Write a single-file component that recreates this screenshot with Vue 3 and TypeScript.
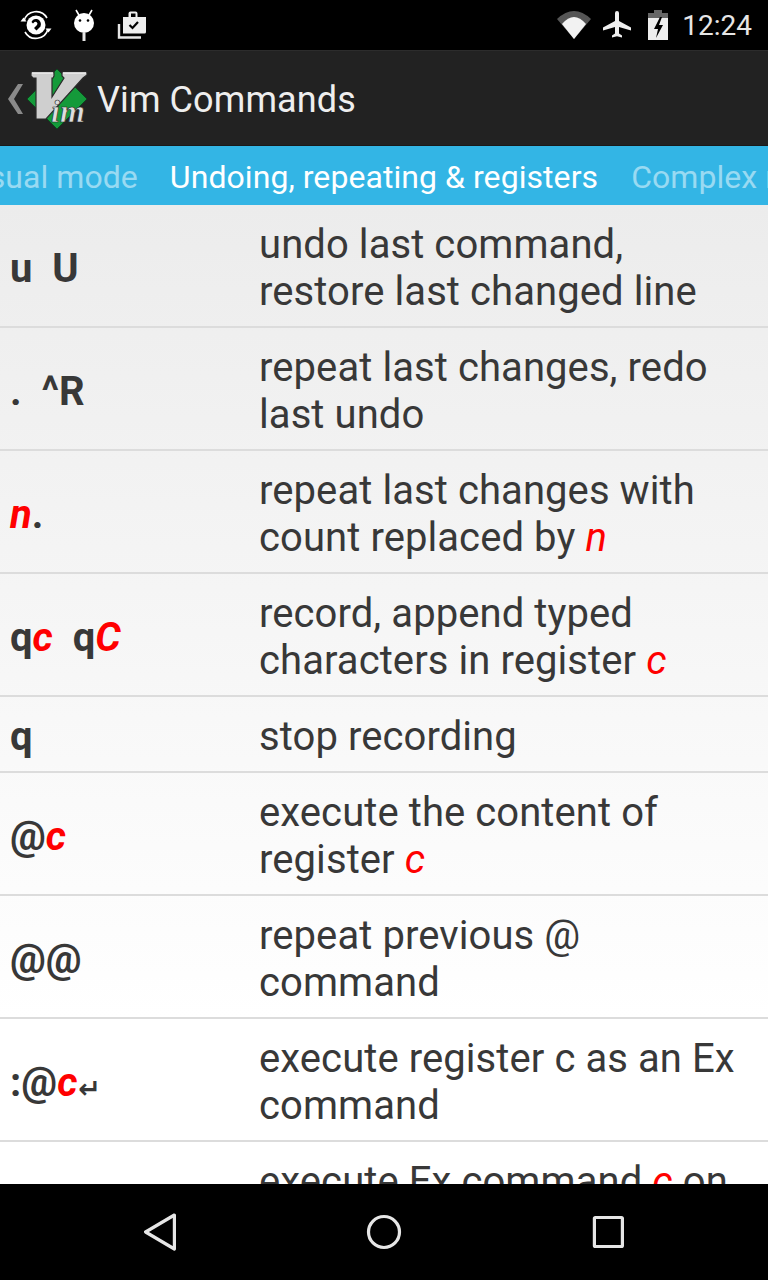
<script setup lang="ts">
interface Part {
  text: string
  arg?: boolean
  enter?: boolean
}

interface Row {
  keys: Part[]
  desc: Part[]
}

const rows: Row[] = [
  { keys: [{ text: 'u\u00a0\u00a0U' }], desc: [{ text: 'undo last command, restore last changed line' }] },
  { keys: [{ text: '.\u00a0\u00a0^R' }], desc: [{ text: 'repeat last changes, redo last undo' }] },
  {
    keys: [{ text: 'n', arg: true }, { text: '.' }],
    desc: [{ text: 'repeat last changes with count replaced by ' }, { text: 'n', arg: true }],
  },
  {
    keys: [{ text: 'q' }, { text: 'c', arg: true }, { text: '\u00a0\u00a0q' }, { text: 'C', arg: true }],
    desc: [{ text: 'record, append typed characters in register ' }, { text: 'c', arg: true }],
  },
  { keys: [{ text: 'q' }], desc: [{ text: 'stop recording' }] },
  {
    keys: [{ text: '@' }, { text: 'c', arg: true }],
    desc: [{ text: 'execute the content of register ' }, { text: 'c', arg: true }],
  },
  { keys: [{ text: '@@' }], desc: [{ text: 'repeat previous @ command' }] },
  {
    keys: [{ text: ':@' }, { text: 'c', arg: true }, { text: '↵', enter: true }],
    desc: [{ text: 'execute register c as an Ex command' }],
  },
  {
    keys: [],
    desc: [{ text: 'execute Ex command ' }, { text: 'c', arg: true }, { text: ' on all lines' }],
  },
]
</script>

<template>
  <div class="screen">
    <div class="status-bar">
      <div class="status-left">
        <svg width="32" height="32" viewBox="0 0 32 32">
          <path d="M4 12a12.500 12.500 0 0 1 23-3M28 20a12.500 12.500 0 0 1-23 3" fill="none" stroke="#fff" stroke-width="1.600" />
          <path d="M0.500 12.500l3-4 3 4zM31.500 19.500l-3 4-3-4z" fill="#fff" />
          <circle cx="16" cy="16" r="9.500" fill="#fff" />
          <path d="M17 10a5.500 5.500 0 0 1 3.500 7.500l-4 4-2.500-2.500 3-3a2 2 0 0 0-2.500-3l-1.500 1.500-1.500-1.500a5 5 0 0 1 5.500-3z" fill="#000" />
        </svg>
        <svg width="24" height="32" viewBox="0 0 24 32">
          <path d="M4 1l3.500 6M20 1l-3.500 6" stroke="#fff" stroke-width="1.600" fill="none" />
          <circle cx="12" cy="14" r="10" fill="#fff" />
          <rect x="10.500" y="24" width="3" height="8" fill="#e6e6e6" />
          <circle cx="8" cy="11.500" r="1.300" fill="#000" />
          <circle cx="16" cy="11.500" r="1.300" fill="#000" />
        </svg>
        <svg width="30" height="30" viewBox="0 0 30 30">
          <path d="M2 14v13.500h22" fill="none" stroke="#e6e6e6" stroke-width="2.400" />
          <path d="M6 7h5.500V3.500a2 2 0 0 1 2-2h5a2 2 0 0 1 2 2V7H29v15a1.500 1.500 0 0 1-1.500 1.500H6z" fill="#eee" />
          <rect x="14" y="3.500" width="4.500" height="3.500" fill="#000" />
          <path d="M12.500 15l3 3 5.500-6" fill="none" stroke="#000" stroke-width="2.200" />
        </svg>
      </div>
      <div class="status-right">
        <svg class="wifi" width="34" height="28" viewBox="0 0 34 28">
          <path d="M0 8Q17-8 34 8L17 28z" fill="#555" />
          <path d="M5 13Q17-1 29 13L17 28z" fill="#f2f2f2" />
        </svg>
        <svg class="plane" width="30" height="30" viewBox="0 0 30 30">
          <path d="M13 3a2 2 0 0 1 4 0v8l12 6.500v3l-12-3.500v6.500l3 2v2l-5-1.200-5 1.200v-2l3-2V17L1 20.500v-3L13 11z" fill="#f0f0f0" />
        </svg>
        <svg width="20" height="30" viewBox="0 0 20 30">
          <path d="M6 0h8v3h6v5H0V3h6z" fill="#666" />
          <path d="M0 8h20v22H0z" fill="#eee" />
          <path d="M12 7l-6 12h4l-2 9 7-13h-4l3-8z" fill="#000" />
        </svg>
        <span class="clock">12:24</span>
      </div>
    </div>

    <div class="app-bar">
      <svg width="15" height="30" viewBox="0 0 15 30">
        <path d="M10 0h5L6 15l9 15h-5L0 15z" fill="#8a8a8a" />
      </svg>
      <svg class="logo" width="62" height="62" viewBox="27 67 62 62">
        <path d="M57 68l30 30-30 30-30-30z" fill="#149a3a" stroke="#0b3d1c" stroke-width="0.800" />
        <path
          d="M31 71h23v4l-1 2h-1v19l12-19-2-2v-4h25v3l-4 3-37 41H36V77h-3l-2-2z"
          fill="#cfcfcf"
          stroke="#2a2a2a"
          stroke-width="1.200"
        />
        <path d="M32 72h21M63 72h23" stroke="#eee" stroke-width="1.500" />
        <text class="logo-text" x="51" y="121">im</text>
      </svg>
      <span class="app-title">Vim Commands</span>
    </div>

    <div class="tabs">
      <span class="tab side left">Visual mode</span>
      <span class="tab active">Undoing, repeating &amp; registers</span>
      <span class="tab side right">Complex repeats</span>
    </div>

    <div class="list">
      <div v-for="(row, i) in rows" :key="i" class="row">
        <div class="keys">
          <span
            v-for="(part, j) in row.keys"
            :key="j"
            :class="{ arg: part.arg, enter: part.enter }"
          >{{ part.text }}</span>
        </div>
        <div class="desc">
          <span v-for="(part, j) in row.desc" :key="j" :class="{ arg: part.arg }">{{ part.text }}</span>
        </div>
      </div>
    </div>

    <div class="nav-bar">
      <svg width="36" height="38" viewBox="0 0 36 38">
        <path d="M32.400 2L3.600 19l28.800 17z" fill="none" stroke="#e6e6e6" stroke-width="3.200" stroke-linejoin="round" />
      </svg>
      <svg width="36" height="36" viewBox="0 0 36 36">
        <circle cx="18" cy="18" r="15.500" fill="none" stroke="#e6e6e6" stroke-width="3.200" />
      </svg>
      <svg width="36" height="36" viewBox="0 0 36 36">
        <rect x="4.400" y="3.500" width="28" height="29" rx="1" fill="none" stroke="#e6e6e6" stroke-width="3.200" />
      </svg>
    </div>
  </div>
</template>

<style>
html,
body {
  margin: 0;
  background: #000;
}
</style>

<style scoped>
.screen {
  width: 768px;
  height: 1280px;
  display: flex;
  flex-direction: column;
  overflow: hidden;
  font-family: Roboto, "Liberation Sans", sans-serif;
}

.status-bar {
  height: 50px;
  flex: none;
  background: #000;
  display: flex;
  justify-content: space-between;
  align-items: center;
  padding: 0 16px 0 20px;
}

.status-left,
.status-right {
  display: flex;
  align-items: center;
}

.status-left {
  gap: 20px;
}

.status-left svg:last-child {
  margin-left: 1px;
}

.status-right {
  gap: 14px;
}

.wifi {
  margin-right: -3px;
}

.plane {
  margin-right: 2px;
}

.clock {
  color: #e6e6e6;
  font-size: 28px;
}

.app-bar {
  height: 96px;
  flex: none;
  box-sizing: border-box;
  background: #222;
  border-top: 1px solid #2c2c2c;
  border-bottom: 1px solid #1a1a1a;
  display: flex;
  align-items: center;
  padding: 2px 0 0 8px;
}

.logo {
  margin-left: 4px;
}

.logo-text {
  font-family: "Liberation Serif", serif;
  font-style: italic;
  font-weight: 700;
  font-size: 32px;
  fill: #ddd;
  stroke: #222;
  stroke-width: 0.600px;
}

.app-title {
  color: #eee;
  font-size: 36px;
  letter-spacing: 0.1px;
  margin-left: 8px;
  padding-top: 2px;
}

.tabs {
  height: 59px;
  flex: none;
  box-sizing: border-box;
  padding-top: 2px;
  background: #33b5e5;
  display: grid;
  grid-template-columns: 1fr auto 1fr;
  align-items: center;
  column-gap: 33px;
  overflow: hidden;
  font-size: 32px;
  letter-spacing: 0.06px;
  white-space: nowrap;
}

.tab {
  min-width: 0;
  color: #fff;
}

.side {
  color: rgba(255, 255, 255, 0.5);
  display: flex;
  overflow: hidden;
}

.side.left {
  justify-content: flex-end;
  margin-right: -1px;
}

.list {
  flex: 1;
  min-height: 0;
  overflow: hidden;
  background: linear-gradient(#ececec, #fff 83%);
}

.row {
  display: grid;
  grid-template-columns: 259px 1fr;
  align-items: center;
  padding: 16px 0 11px;
  border-bottom: 2px solid #dcdcdc;
  color: #383838;
}

.keys {
  padding-left: 10px;
  font-size: 40px;
  font-weight: 700;
  white-space: nowrap;
}

.desc {
  font-size: 40px;
  letter-spacing: 0.08px;
  padding-right: 25px;
}

.arg {
  color: #f00;
  font-style: italic;
}

.enter {
  font-size: 27px;
  line-height: 1;
  font-family: "DejaVu Sans", sans-serif;
  vertical-align: -2px;
  margin-left: 1px;
}

.nav-bar {
  height: 96px;
  flex: none;
  background: #000;
  display: flex;
  align-items: center;
  gap: 188px;
  padding-left: 142px;
}
</style>
